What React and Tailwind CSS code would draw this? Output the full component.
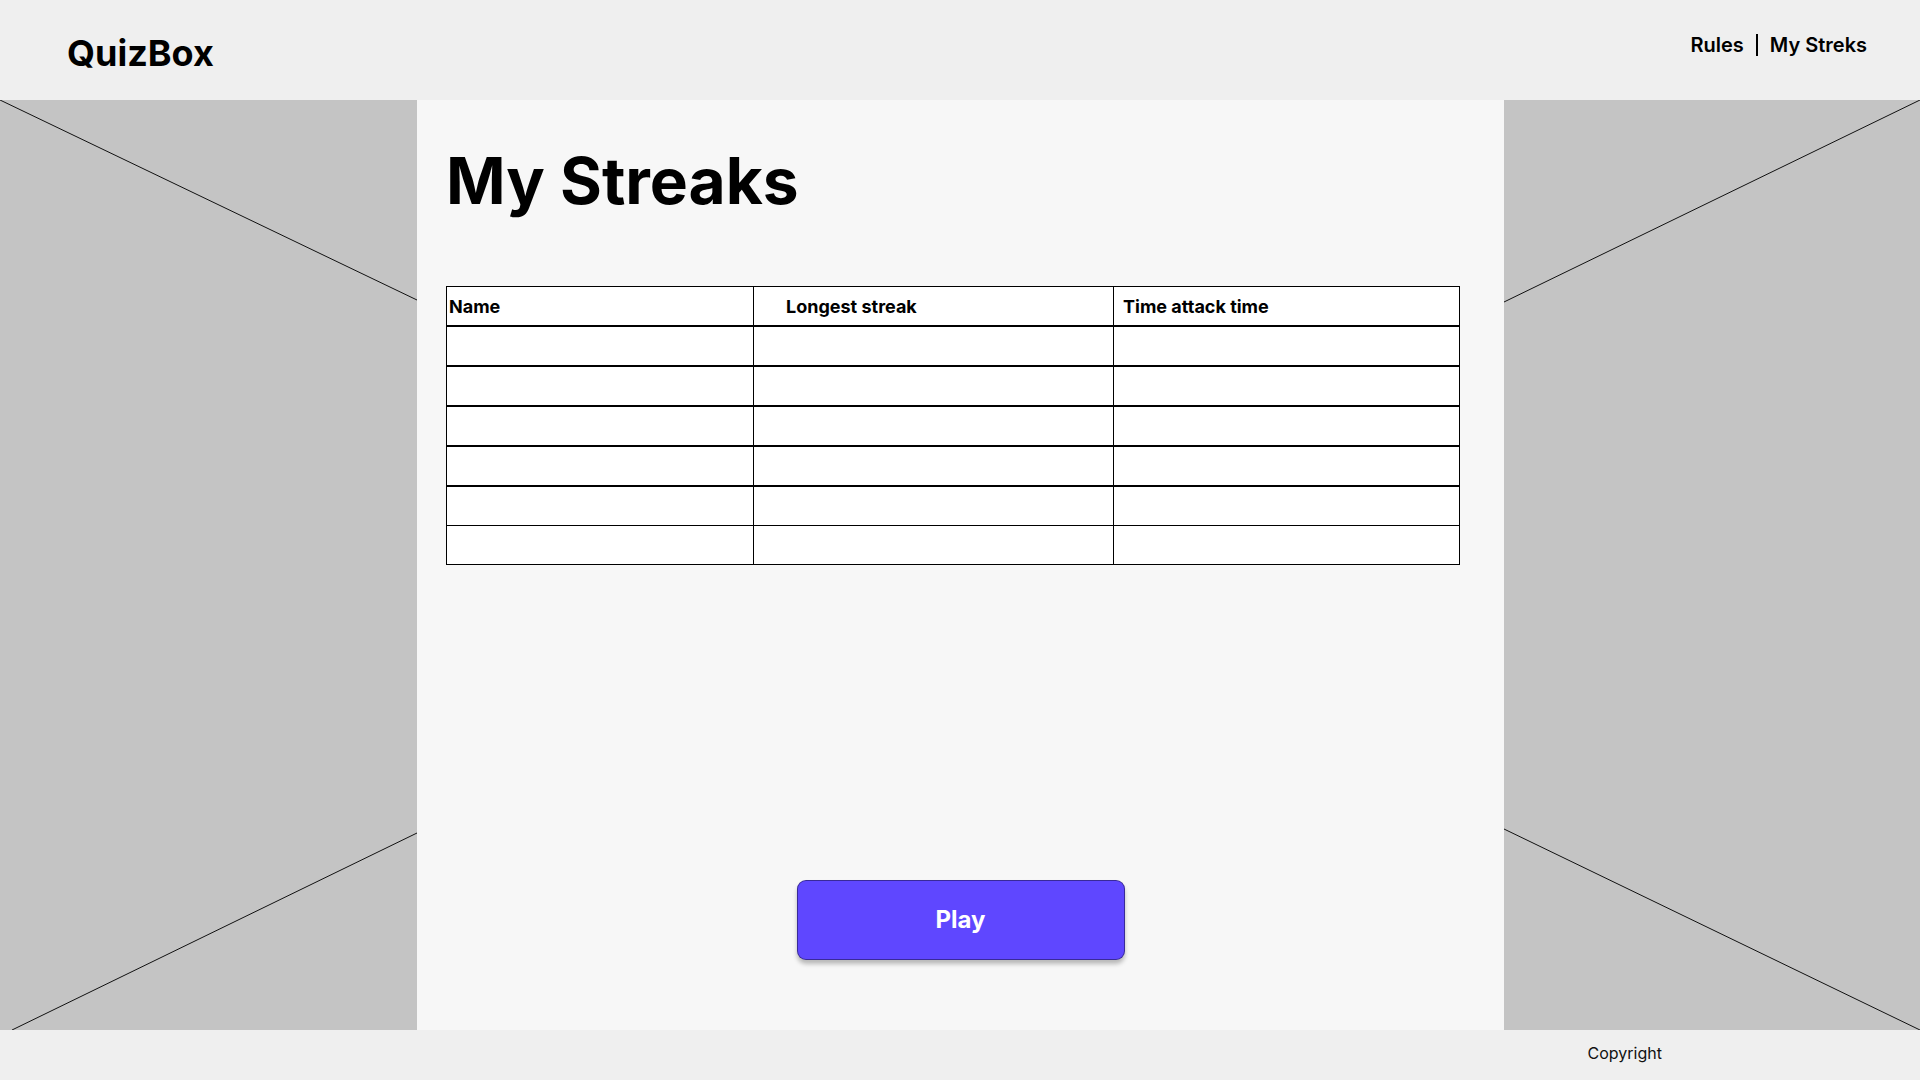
import React from 'react';

const rows = [0, 1, 2, 3, 4, 5];

const SidePanel = ({ side }) => {
    // placeholder image, drawn as a grey box crossed by two lines
    const w = side === 'left' ? 417 : 416;
    return (
        <div className={side === 'left' ? 'w-[417px] shrink-0 bg-[#c4c4c4]' : 'w-[416px] shrink-0 bg-[#c4c4c4]'}>
            <svg className="block w-full h-full" viewBox={`0 0 ${w} 930`} preserveAspectRatio="none">
                {side === 'left' ? (
                    <>
                        <line x1="0" y1="0" x2="417" y2="200" stroke="#111" strokeWidth="1" />
                        <line x1="12" y1="930" x2="417" y2="733" stroke="#111" strokeWidth="1" />
                    </>
                ) : (
                    <>
                        <line x1="0" y1="202" x2="416" y2="0" stroke="#111" strokeWidth="1" />
                        <line x1="0" y1="729" x2="416" y2="930" stroke="#111" strokeWidth="1" />
                    </>
                )}
            </svg>
        </div>
    );
};

const Row = ({ className, children }) => (
    <div className={`grid grid-cols-[307px_360px_1fr] ${className}`}>
        {children}
    </div>
);

const App = () => {
    return (
        <div className="w-[1920px] h-[1080px] flex flex-col text-black font-['Inter','Liberation_Sans',sans-serif]">
            <header className="h-[100px] shrink-0 bg-[#efefef] flex items-start justify-between pt-[35px] pl-[67px] pr-[53px]">
                <h1 className="text-[36px] leading-none font-bold">QuizBox</h1>
                <nav className="flex items-center gap-3 text-[20px] leading-[20px] font-semibold -mt-[1px]">
                    <a>Rules</a>
                    <span className="w-[2px] h-[22px] bg-black" />
                    <a>My Streks</a>
                </nav>
            </header>

            <main className="flex flex-1 min-h-0">
                <SidePanel side="left" />

                <section className="flex-1 bg-[#f7f7f7] flex flex-col pt-[49px] pl-[29px]">
                    <h2 className="text-[64px] leading-none font-bold">My Streaks</h2>

                    <div className="mt-[73px] w-[1014px] border border-black bg-white text-[18px] font-bold">
                        <Row className="h-[40px] border-b-2 border-black">
                            <div className="flex items-center pl-[2px] border-r border-black">Name</div>
                            <div className="flex items-center pl-[32px] border-r border-black">Longest streak</div>
                            <div className="flex items-center pl-[9px]">Time attack time</div>
                        </Row>
                        {rows.map((i) => (
                            <Row
                                key={i}
                                className={
                                    i < 4
                                        ? 'h-[40px] border-b-2 border-black'
                                        : i === 4
                                            ? 'h-[39px] border-b border-black'
                                            : 'h-[38px]'
                                }
                            >
                                <div className="border-r border-black" />
                                <div className="border-r border-black" />
                                <div />
                            </Row>
                        ))}
                    </div>

                    <button className="mt-[315px] self-center -ml-[29px] w-[328px] h-[80px] rounded-[9px] bg-[#5f47ff] border border-black/40 shadow-[0_4px_4px_rgba(0,0,0,0.25)] text-white text-[24px] font-bold">
                        Play
                    </button>
                </section>

                <SidePanel side="right" />
            </main>

            <footer className="h-[50px] shrink-0 bg-[#efefef] flex items-center justify-end pr-[258px] pb-[4px]">
                <span className="text-[16px] text-[#111]">Copyright</span>
            </footer>
        </div>
    );
};

export default App;
